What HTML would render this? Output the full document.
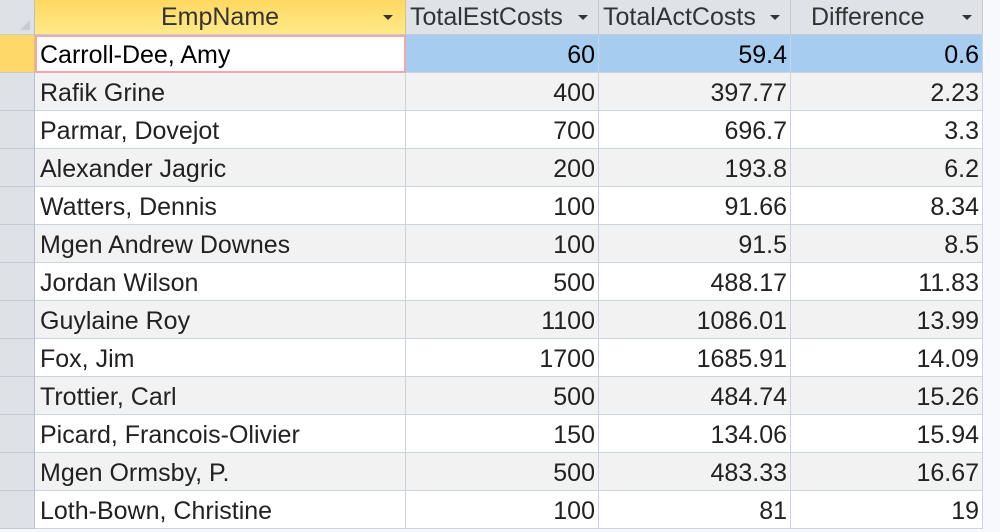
<!DOCTYPE html><html><head><style>
body{margin:0;width:1000px;height:532px;overflow:hidden;background:#f7f9fc;font-family:"Liberation Sans",sans-serif;color:#222;}
.c{position:absolute;box-sizing:border-box;font-size:25px;line-height:41px;white-space:nowrap;overflow:hidden;border-right:1px solid #c9d3e2;border-bottom:1px solid #c9d3e2;}
.h{line-height:35px;background:#dfe3e8;color:#333;border-right:1px solid #c3cbd6;border-bottom:1px solid #c3cbd6;}
.r{text-align:right;padding-right:3px}
.arr{position:absolute;right:12px;top:15px;width:0;height:0;border-left:5px solid transparent;border-right:5px solid transparent;border-top:5px solid #333;}
.sel{position:absolute;left:0;width:35px;background:#dee2e7;border-bottom:1px solid #c3cbd6;border-right:1px solid #b8c0cc;box-sizing:border-box;}
</style></head><body>
<div class="sel" style="top:0;height:35px"><div style="position:absolute;right:4px;bottom:4px;width:0;height:0;border-left:10px solid transparent;border-bottom:10px solid #c7ccd3"></div></div>
<div class="c h" style="left:35px;top:0;width:371px;height:35px;text-align:center;background:linear-gradient(#ffd860,#ffe98a);border-right:1px solid #d8c27a">EmpName<div class="arr"></div></div>
<div class="c h" style="left:406px;top:0;width:193px;height:35px;padding-left:4px">TotalEstCosts<div class="arr" style="right:10px;box-shadow:0 0 0 6px #dfe3e8"></div></div>
<div class="c h" style="left:599px;top:0;width:192px;height:35px;padding-left:4px">TotalActCosts<div style="position:absolute;right:0;top:0;width:26px;height:34px;background:#dfe3e8"></div><div class="arr" style="right:10px"></div></div>
<div class="c h" style="left:791px;top:0;width:192px;height:35px;padding-left:20px">Difference<div class="arr" style="right:10px"></div></div>
<div id="rows"></div>
<script>
var d=[["Carroll-Dee, Amy","60","59.4","0.6"],["Rafik Grine","400","397.77","2.23"],["Parmar, Dovejot","700","696.7","3.3"],["Alexander Jagric","200","193.8","6.2"],["Watters, Dennis","100","91.66","8.34"],["Mgen Andrew Downes","100","91.5","8.5"],["Jordan Wilson","500","488.17","11.83"],["Guylaine Roy","1100","1086.01","13.99"],["Fox, Jim","1700","1685.91","14.09"],["Trottier, Carl","500","484.74","15.26"],["Picard, Francois-Olivier","150","134.06","15.94"],["Mgen Ormsby, P.","500","483.33","16.67"],["Loth-Bown, Christine","100","81","19"]];
var h="";
d.forEach(function(r,i){var t=35+38*i;var bg=i==0?"#a6cdf0":(i%2?"#f2f2f2":"#fff");var col=i==0?"color:#000;":"";
h+='<div class="sel" style="top:'+t+'px;height:38px;'+(i==0?'background:#ffd86a;border-right-color:#e6c25a':'')+'"></div>';
h+='<div class="c" style="'+col+'left:35px;top:'+t+'px;width:371px;height:38px;padding-left:5px;background:'+(i==0?'#fff;border:2px solid #f2a8a8;line-height:37px;padding-left:3px':bg)+'">'+r[0]+'</div>';
h+='<div class="c r" style="'+col+'left:406px;top:'+t+'px;width:193px;height:38px;background:'+bg+'">'+r[1]+'</div>';
h+='<div class="c r" style="'+col+'left:599px;top:'+t+'px;width:192px;height:38px;background:'+bg+'">'+r[2]+'</div>';
h+='<div class="c r" style="'+col+'left:791px;top:'+t+'px;width:192px;height:38px;background:'+bg+'">'+r[3]+'</div>';});
document.getElementById("rows").innerHTML=h;
</script>
</body></html>
